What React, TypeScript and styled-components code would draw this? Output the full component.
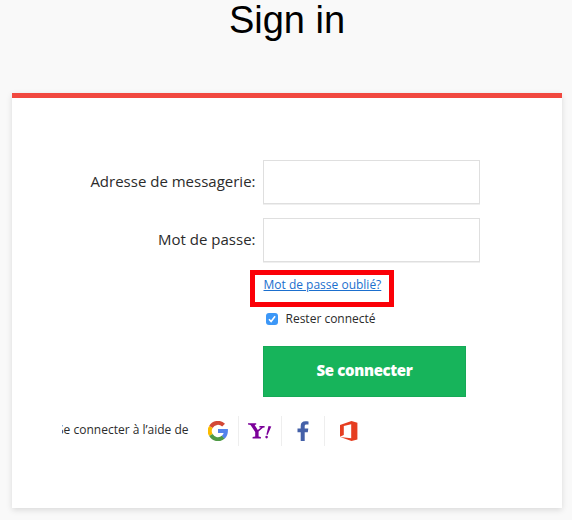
import React from "react";
import styled, { createGlobalStyle } from "styled-components";

const GlobalStyle = createGlobalStyle`
  * {
    box-sizing: border-box;
  }
  body {
    margin: 0;
    overflow: hidden;
    background-color: #f9f9f9;
    color: #2b2b2b;
    font-family: "Open Sans", "Noto Sans", sans-serif;
  }
`;

const GoogleIcon: React.FC = () => (
  <svg width="20" height="20" viewBox="0 0 20 20" fill="none" strokeWidth="4">
    <path stroke="#d34836" d="M2.9 5.9A8.1 8.1 0 0 1 15.6 4.2" />
    <path stroke="#fbbb00" d="M2.9 14.1A8.1 8.1 0 0 1 2.9 5.9" />
    <path stroke="#4f9a45" d="M15.4 16.1A8.1 8.1 0 0 1 2.9 14.1" />
    <path stroke="#5383ec" d="M10 10H17.9C17.9 12.6 17 14.7 15.2 16.2" />
  </svg>
);

const YahooIcon: React.FC = () => (
  <svg width="24" height="18" viewBox="0 0 24 18" fill="#7b0099">
    <path d="M0 1.2H8.2V2.5L6.6 2.9 9.8 7.9 13 5.6 11.4 5.4V4.1H16.6V5.4L14.9 5.8 10.6 9.6V14.5L12.9 15V16.5H4.6V15L7.2 14.5V10L2.5 2.9 0 2.5Z" />
    <path d="M20.5 4 23.3 4.6 19.6 12.9 18.4 12.5Z" />
    <circle cx="18.6" cy="15.1" r="1.3" />
  </svg>
);

const FacebookIcon: React.FC = () => (
  <svg width="12" height="20" viewBox="0 0 12 20">
    <path
      fill="#4460a8"
      d="M3.7 20V11.2H0.5V7.5H3.7V4.9C3.7 1.7 5.5 0.2 8.4 0.2 9.8 0.2 11 0.3 11.5 0.4V3.6H9.7C8.1 3.6 7.7 4.3 7.7 5.3V7.5H11.3L10.8 11.2H7.7V20Z"
    />
  </svg>
);

const OfficeIcon: React.FC = () => (
  <svg width="18" height="20" viewBox="0 0 18 20">
    <path fill="#e63e21" d="M0 4 11.5 0 17.4 1.8V18.4L11.5 20 0.2 16 11.2 17.2V3.2L3.8 5V14.1L0 15.8Z" />
  </svg>
);

const App: React.FC = () => {
  return (
    <Page>
      <GlobalStyle />
      <Title>Sign in</Title>
      <Card>
        <Form onSubmit={(e) => e.preventDefault()}>
          <Label htmlFor="email">Adresse de messagerie:</Label>
          <Input id="email" type="email" />
          <Label htmlFor="password">Mot de passe:</Label>
          <Input id="password" type="password" />
          <Actions>
            <Highlight>
              <ForgotLink href="#">Mot de passe oublié?</ForgotLink>
            </Highlight>
            <Remember>
              <Checkbox type="checkbox" defaultChecked />
              <CheckMark viewBox="0 0 12 12">
                <path d="M3 6.3 5.1 8.6 9.1 3.3" />
              </CheckMark>
              <RememberText>Rester connecté</RememberText>
            </Remember>
            <SubmitButton type="submit">Se connecter</SubmitButton>
          </Actions>
        </Form>
        <Social>
          <SocialText>
            <span>Se connecter à l’aide de</span>
          </SocialText>
          <Provider width={42}>
            <GoogleIcon />
          </Provider>
          <Provider width={43}>
            <YahooIcon />
          </Provider>
          <Provider width={43}>
            <FacebookIcon />
          </Provider>
          <Provider width={47}>
            <OfficeIcon />
          </Provider>
        </Social>
      </Card>
    </Page>
  );
};

export default App;

const Page = styled.div`
  height: 520px;
  padding: 0 10px 0 12px;
`;

const Title = styled.h1`
  margin: 0;
  height: 93px;
  color: #000;
  font-family: "Liberation Sans", Arial, sans-serif;
  font-size: 38px;
  font-weight: 400;
  line-height: 40px;
  text-align: center;
`;

const Card = styled.div`
  height: 415px;
  padding: 62px 50px 0;
  background-color: #fff;
  border-top: 5px solid #f1483f;
  box-shadow: 0 2px 6px rgba(0, 0, 0, 0.13);
`;

const Form = styled.form`
  display: grid;
  grid-template-columns: 193.5px 217px;
  grid-template-rows: 44px 44px auto;
  column-gap: 7.5px;
  row-gap: 14px;
`;

const Label = styled.label`
  font-size: 15px;
  line-height: 43px;
  text-align: right;
  white-space: nowrap;
`;

const Input = styled.input`
  width: 217px;
  height: 44px;
  padding: 0 12px;
  border: 1px solid #dfdfdf;
  border-radius: 0;
  outline: none;
  box-shadow: 0 1px 0 #efefef;
  font: inherit;
`;

const Actions = styled.div`
  grid-column: 2;
  display: flex;
  flex-direction: column;
  align-items: flex-start;
  margin-top: -6px;
`;

const Highlight = styled.div`
  display: flex;
  align-items: flex-start;
  width: 144px;
  height: 37px;
  margin-left: -13px;
  padding-left: 8.5px;
  border: 5px solid #fb0007;
`;

const ForgotLink = styled.a`
  color: #1b6fce;
  font-size: 12px;
  line-height: 19px;
  white-space: nowrap;
`;

const Remember = styled.label`
  display: grid;
  grid-template-columns: 12px auto;
  align-items: center;
  column-gap: 7.5px;
  height: 18px;
  margin: 3px 0 0 3px;
`;

const RememberText = styled.span`
  font-size: 12px;
  line-height: 16px;
`;

const Checkbox = styled.input`
  grid-area: 1 / 1;
  appearance: none;
  width: 12px;
  height: 12px;
  margin: 0;
  border-radius: 3px;
  background-color: #3c97f7;
`;

const CheckMark = styled.svg`
  grid-area: 1 / 1;
  width: 12px;
  height: 12px;
  fill: none;
  stroke: #fff;
  stroke-width: 1.6;
  pointer-events: none;
`;

const SubmitButton = styled.button`
  width: 203px;
  height: 51px;
  margin-top: 18px;
  padding: 0 0 3px;
  border: 1px solid #16a957;
  background-color: #17b45b;
  color: #fff;
  font-family: inherit;
  font-size: 15px;
  font-weight: 800;
  letter-spacing: -0.35px;
`;

const Social = styled.div`
  display: flex;
  align-items: center;
  height: 30px;
  margin-top: 19px;
`;

const SocialText = styled.div`
  display: flex;
  justify-content: flex-end;
  width: 126.5px;
  margin-right: 8.5px;
  padding-bottom: 3px;
  overflow: hidden;
  font-size: 12px;
  white-space: nowrap;
`;

const Provider = styled.div<{ width: number }>`
  display: flex;
  align-items: center;
  justify-content: center;
  width: ${(p) => p.width}px;
  height: 30px;
  border-right: 1px solid #eee;
  &:last-child {
    border-right: 0;
  }
`;
